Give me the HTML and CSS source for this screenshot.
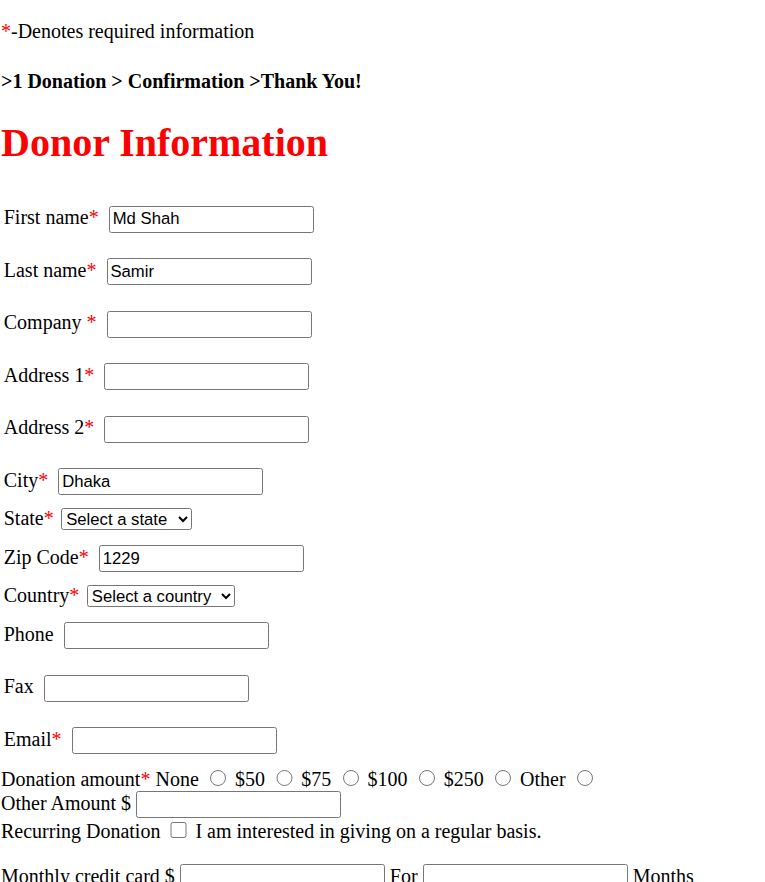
FILE: index.html
```html
<!DOCTYPE html>
<html>
<head>
<meta charset="utf-8">
<title>Donor Information</title>
<link rel="stylesheet" href="styles.css">
</head>
<body>
<p class="note"><span class="req">*</span>-Denotes required information</p>
<h4 class="steps">&gt;1 Donation &gt; Confirmation &gt;Thank You!</h4>
<h1 class="title">Donor Information</h1>
<form class="donor-form">
  <div class="fields">
    <div class="field"><label>First name<span class="req">*</span></label><input class="text" type="text" value="Md Shah"></div>
    <div class="field"><label>Last name<span class="req">*</span></label><input class="text" type="text" value="Samir"></div>
    <div class="field"><label>Company <span class="req">*</span></label><input class="text" type="text"></div>
    <div class="field"><label>Address 1<span class="req">*</span></label><input class="text" type="text"></div>
    <div class="field"><label>Address 2<span class="req">*</span></label><input class="text" type="text"></div>
    <div class="field short"><label>City<span class="req">*</span></label><input class="text" type="text" value="Dhaka"></div>
    <div class="field short"><label>State<span class="req">*</span></label><select class="sel sel-state"><option>Select a state</option></select></div>
    <div class="field short"><label>Zip Code<span class="req">*</span></label><input class="text" type="text" value="1229"></div>
    <div class="field short"><label>Country<span class="req">*</span></label><select class="sel sel-country"><option>Select a country</option></select></div>
    <div class="field"><label>Phone</label><input class="text" type="text"></div>
    <div class="field"><label>Fax</label><input class="text" type="text"></div>
    <div class="field short"><label>Email<span class="req">*</span></label><input class="text" type="text"></div>
  </div>
  <div class="donation">
    Donation amount<span class="req">*</span> None <input class="radio" type="radio" name="amt"> $50 <input class="radio" type="radio" name="amt"> $75 <input class="radio" type="radio" name="amt"> $100 <input class="radio" type="radio" name="amt"> $250 <input class="radio" type="radio" name="amt"> Other <input class="radio" type="radio" name="amt"><br>
    Other Amount $ <input class="text" type="text"><br>
    Recurring Donation <input class="check" type="checkbox"> I am interested in giving on a regular basis.
  </div>
  <p class="monthly">Monthly credit card $ <input class="text" type="text"> For <input class="text" type="text"> Months</p>
</form>
</body>
</html>
```
FILE: styles.css
```css
html, body {
  background: #fff;
}
body {
  margin: 0;
  padding-left: 1px;
  font-family: "Liberation Serif", "Times New Roman", serif;
  font-size: 20px;
  color: #000;
}
.req {
  color: #ff0000;
}
.note {
  margin: 20px 0;
}
.steps {
  font-size: 20px;
  font-weight: bold;
  margin: 26.6px 0;
}
.title {
  font-size: 40px;
  font-weight: bold;
  color: #ff0000;
  margin: 26.8px 0;
}
.donor-form {
  margin: 0;
}
.fields {
  margin-top: 39.6px;
}
.field {
  display: flex;
  align-items: baseline;
  gap: 10px;
  height: 52.5px;
  padding-left: 2.75px;
}
.field.short {
  height: 38.5px;
}
.text {
  box-sizing: border-box;
  width: 205px;
  height: 27px;
  margin: 0;
  padding: 1px 3px;
  border: 1px solid #767676;
  border-radius: 2.5px;
  font-family: "Liberation Sans", Arial, sans-serif;
  font-size: 16.67px;
  color: #000;
  background: #fff;
}
.sel {
  box-sizing: border-box;
  height: 22.5px;
  margin: 0 0 0 -2.5px;
  border: 1px solid #767676;
  border-radius: 2.5px;
  font-family: "Liberation Sans", Arial, sans-serif;
  font-size: 16.67px;
  color: #000;
  background: #fff;
}
.sel-state {
  width: 130.5px;
}
.sel-country {
  width: 148.5px;
}
.donation {
  line-height: normal;
}
.radio {
  width: 16.25px;
  height: 16.25px;
  margin: 3.75px 3.75px 0 6.25px;
}
.check {
  width: 16.25px;
  height: 16.25px;
  margin: 3.75px 3.75px 0 5px;
}
.monthly {
  margin: 21px 0 0;
}
```
